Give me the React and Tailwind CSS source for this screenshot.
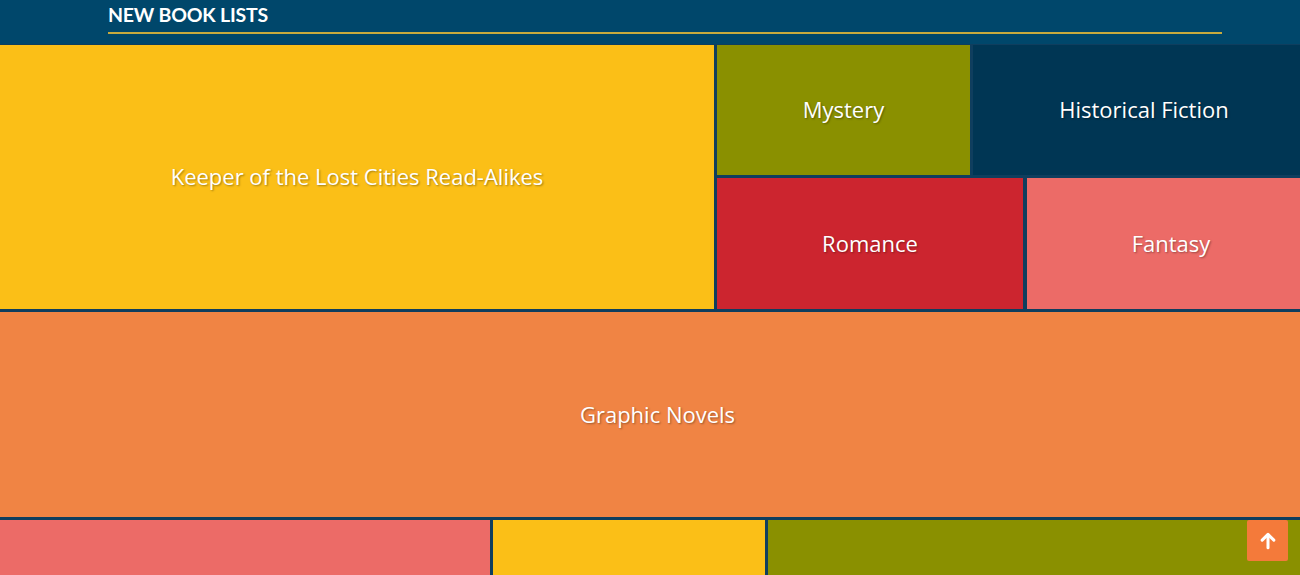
import React from 'react';

const Tile = ({ label, color, className = '' }) => (
  <a
    href="#"
    className={`flex items-center justify-center text-white text-[22px] font-['Open_Sans',sans-serif] [text-shadow:1px_1px_2px_rgba(0,0,0,0.35)] ${color} ${className}`}
  >
    {label}
  </a>
);

export default function App() {
  return (
    <div className="w-[1300px] h-[575px] overflow-hidden bg-[#0f3e5e] relative">
      {/* header */}
      <div className="h-[44px] bg-[#00476b] px-[108px] pt-[4px]">
        <h2 className="text-white text-[19.5px] font-bold font-['Lato',sans-serif] tracking-[-0.2px] leading-[22px]">
          NEW BOOK LISTS
        </h2>
        <div className="mt-[6px] w-[1114px] h-[2px] bg-[#c8aa3e]"></div>
      </div>

      {/* tiles - wider than the window, cut off on the right */}
      <div className="w-[1315px] pt-px flex flex-col gap-[3px]">
        <div className="flex gap-[3px] h-[264px]">
          <Tile label="Keeper of the Lost Cities Read-Alikes" color="bg-[#fbbf17]" className="w-[714px] pb-[1px]" />
          <div className="flex-1 flex flex-col gap-[3px]">
            <div className="flex gap-[3px] h-[130px]">
              <Tile label="Mystery" color="bg-[#8a9000]" className="w-[253px] pb-[2px]" />
              <Tile label="Historical Fiction" color="bg-[#003654]" className="flex-1 pb-[2px]" />
            </div>
            <div className="flex gap-[4px] flex-1">
              <Tile label="Romance" color="bg-[#cc252f]" className="w-[306px]" />
              <Tile label="Fantasy" color="bg-[#ec6b67]" className="flex-1" />
            </div>
          </div>
        </div>
        <Tile label="Graphic Novels" color="bg-[#f08444]" className="h-[205px]" />
        <div className="flex gap-[3px] h-[80px]">
          <div className="w-[490px] bg-[#ec6b67]"></div>
          <div className="w-[272px] bg-[#fbbf17]"></div>
          <div className="flex-1 bg-[#8a9000]"></div>
        </div>
      </div>

      {/* back to top */}
      <button className="absolute left-[1247px] top-[520px] w-[41px] h-[41px] rounded-[2px] bg-[#f47a3a] flex items-center justify-center">
        <svg width="20" height="20" viewBox="0 0 24 24" fill="none" stroke="white" strokeWidth="3.6" strokeLinecap="round" strokeLinejoin="round">
          <path d="M12 20V5" />
          <path d="M5 11l7-7 7 7" />
        </svg>
      </button>
    </div>
  );
}
